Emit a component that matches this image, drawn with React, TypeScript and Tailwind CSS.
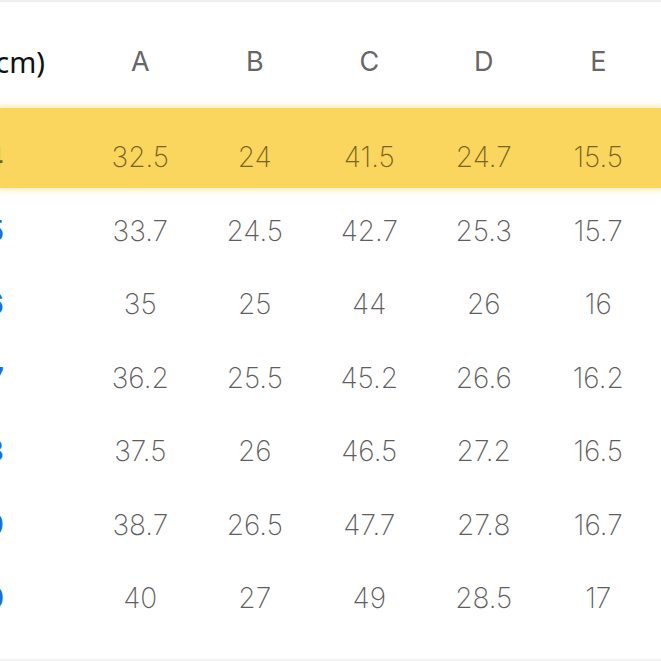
import React from "react";

const rows: { size: string; vals: string[] }[] = [
  { size: "34", vals: ["32.5", "24", "41.5", "24.7", "15.5"] },
  { size: "35", vals: ["33.7", "24.5", "42.7", "25.3", "15.7"] },
  { size: "36", vals: ["35", "25", "44", "26", "16"] },
  { size: "37", vals: ["36.2", "25.5", "45.2", "26.6", "16.2"] },
  { size: "38", vals: ["37.5", "26", "46.5", "27.2", "16.5"] },
  { size: "39", vals: ["38.7", "26.5", "47.7", "27.8", "16.7"] },
  { size: "40", vals: ["40", "27", "49", "28.5", "17"] },
];

const cols = ["A", "B", "C", "D", "E"];

export default function App() {
  return (
    <div
      className="w-[661px] h-[661px] bg-white overflow-hidden flex flex-col"
      style={{ fontFamily: "Inter, 'Noto Sans', sans-serif" }}
    >
      <div className="h-[2px] bg-[#ececec]" />
      {/* header */}
      <div className="h-[106px] pt-[12px] grid grid-cols-[83px_repeat(5,114.5px)] items-center">
        <div
          className="flex justify-end pr-[38px] whitespace-nowrap text-[29px] text-[#111] leading-none"
          style={{ fontFamily: "'Noto Sans', sans-serif" }}
        >
          사이즈(cm)
        </div>
        {cols.map((c) => (
          <div key={c} className="text-center text-[27px] text-[#666666] leading-none">
            {c}
          </div>
        ))}
      </div>
      {/* rows */}
      {rows.map((r, i) => {
        const first = i === 0;
        return (
          <div
            key={r.size}
            className={
              first
                ? "h-[80px] pt-[18px] bg-[#fad65f] shadow-[0_0_6px_2px_rgba(250,214,95,0.5)] grid grid-cols-[83px_repeat(5,114.5px)] items-center"
                : "h-[73.5px] pt-[12px] grid grid-cols-[83px_repeat(5,114.5px)] items-center"
            }
          >
            <div className="flex justify-end pr-[79px] whitespace-nowrap leading-none">
              <span
                className={
                  first
                    ? "text-[28px] text-[#5f6a2c] font-medium"
                    : "text-[28px] text-[#1a6fe0] font-medium"
                }
              >
                {r.size}
              </span>
            </div>
            {r.vals.map((v, j) => (
              <div
                key={j}
                className={
                  first
                    ? "text-center text-[28px] font-extralight text-[#7a6420] leading-none"
                    : "text-center text-[28px] font-extralight text-[#5e5e5e] leading-none"
                }
              >
                {v}
              </div>
            ))}
          </div>
        );
      })}
      <div className="flex-1" />
      <div className="h-[2px] bg-[#f3f3f3]" />
    </div>
  );
}
